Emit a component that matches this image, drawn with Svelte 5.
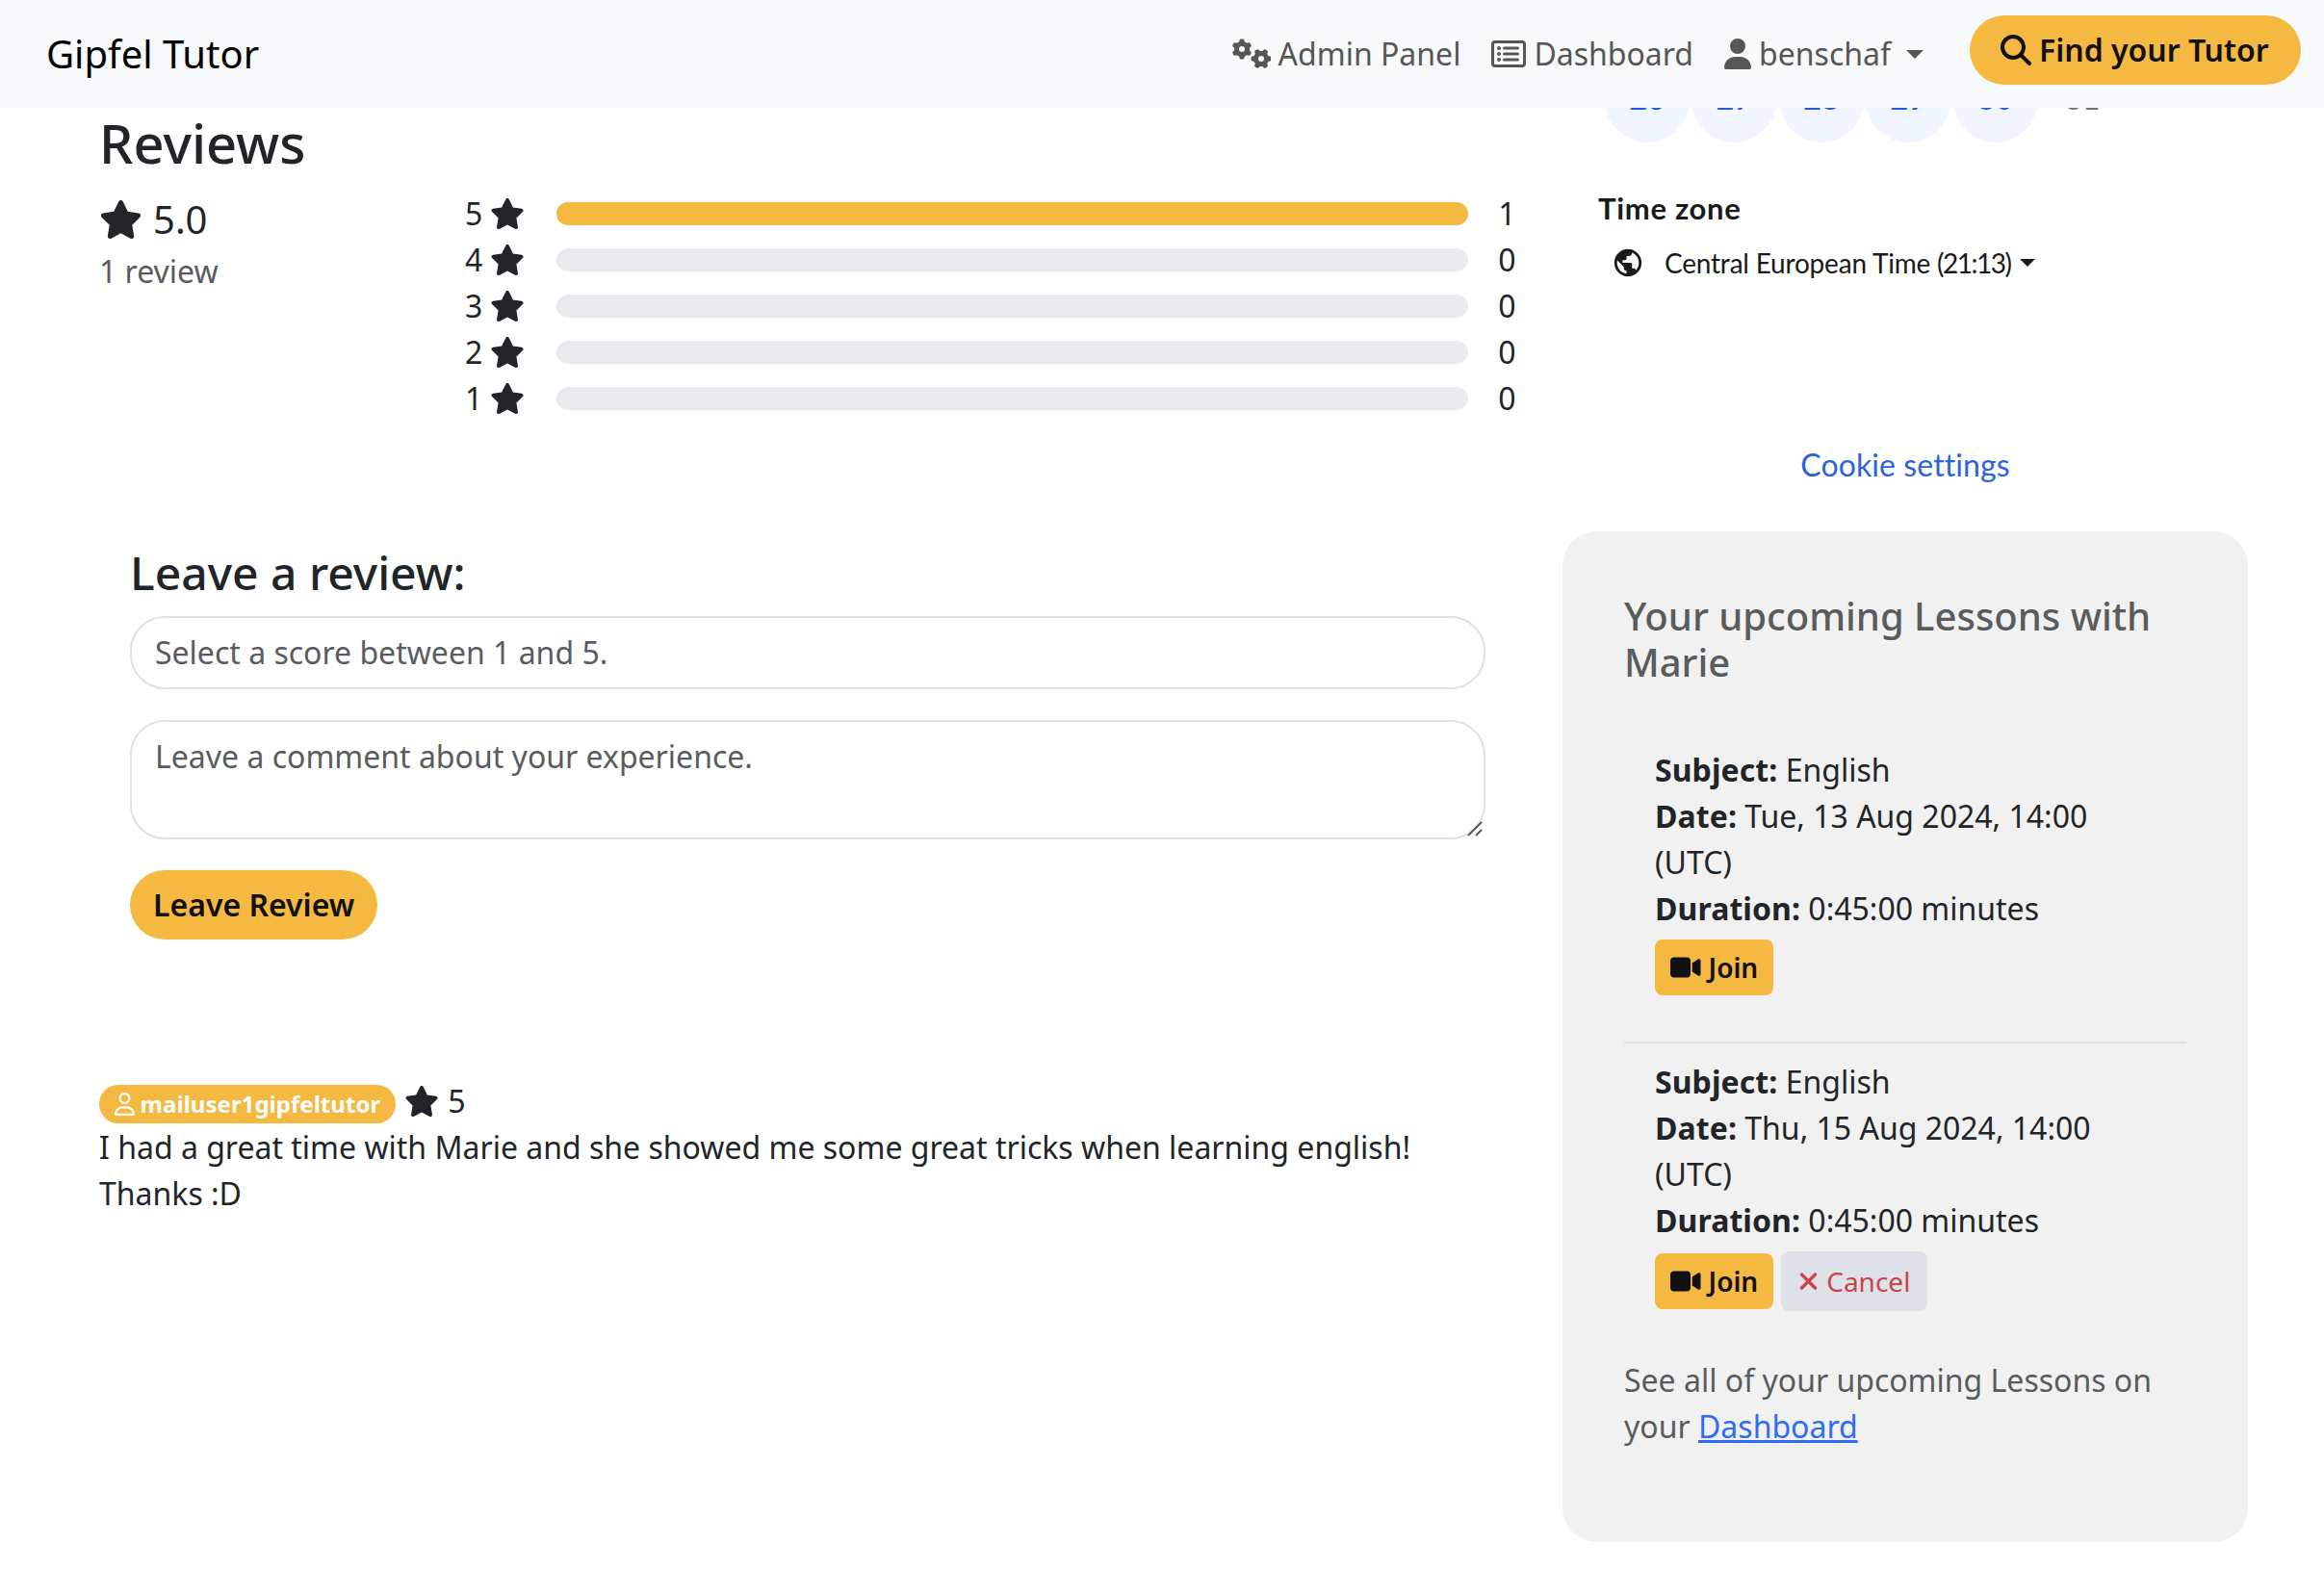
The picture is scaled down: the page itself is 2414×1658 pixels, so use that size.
<script>
  const icons = {
    star: {
      w: 576,
      d: 'M316.9 18C311.6 7 300.4 0 288.1 0s-23.4 7-28.8 18L195 150.3 51.4 171.5c-12 1.8-22 10.2-25.7 21.7s-.7 24.2 7.9 32.7L137.8 329 113.2 474.7c-2 12 3 24.2 12.9 31.3s23 8 33.8 2.3l128.3-68.5 128.3 68.5c10.8 5.7 23.9 4.9 33.8-2.3s14.9-19.3 12.9-31.3L438.5 329 542.7 225.9c8.6-8.5 11.7-21.2 7.9-32.7s-13.7-19.9-25.7-21.7L381.2 150.3 316.9 18z'
    },
    user: {
      w: 448,
      d: 'M224 256A128 128 0 1 0 224 0a128 128 0 1 0 0 256zm-45.7 48C79.8 304 0 383.8 0 482.3C0 498.7 13.3 512 29.7 512H418.3c16.4 0 29.7-13.3 29.7-29.7C448 383.8 368.2 304 269.7 304H178.3z'
    },
    userOutline: {
      w: 448,
      d: 'M304 128a80 80 0 1 0-160 0 80 80 0 1 0 160 0zM96 128a128 128 0 1 1 256 0A128 128 0 1 1 96 128zM49.3 464H398.7c-8.9-63.3-63.3-112-129-112H178.3c-65.7 0-120.1 48.7-129 112zM0 482.3C0 383.8 79.8 304 178.3 304h91.4C368.2 304 448 383.8 448 482.3c0 16.4-13.3 29.7-29.7 29.7H29.7C13.3 512 0 498.7 0 482.3z'
    },
    search: {
      w: 512,
      d: 'M416 208c0 45.9-14.9 88.3-40 122.7L502.6 457.4c12.5 12.5 12.5 32.8 0 45.3s-32.8 12.5-45.3 0L330.7 376c-34.4 25.2-76.8 40-122.7 40C93.1 416 0 322.9 0 208S93.1 0 208 0S416 93.1 416 208zM208 352a144 144 0 1 0 0-288 144 144 0 1 0 0 288z'
    },
    video: {
      w: 576,
      d: 'M0 128C0 92.7 28.7 64 64 64H320c35.3 0 64 28.7 64 64V384c0 35.3-28.7 64-64 64H64c-35.3 0-64-28.7-64-64V128zM559.1 99.8c10.4 5.6 16.9 16.4 16.9 28.2V384c0 11.8-6.5 22.6-16.9 28.2s-23 5-32.9-1.6l-96-64L416 337.1V320 192 174.9l14.2-9.5 96-64c9.8-6.5 22.4-7.2 32.9-1.6z'
    },
    xmark: {
      w: 384,
      d: 'M342.6 150.6c12.5-12.5 12.5-32.8 0-45.3s-32.8-12.5-45.3 0L192 210.7 86.6 105.4c-12.5-12.5-32.8-12.5-45.3 0s-12.5 32.8 0 45.3L146.7 256 41.4 361.4c-12.5 12.5-12.5 32.8 0 45.3s32.8 12.5 45.3 0L192 301.3 297.4 406.6c12.5 12.5 32.8 12.5 45.3 0s12.5-32.8 0-45.3L237.3 256 342.6 150.6z'
    }
  };
  const gear =
    'M308.5 135.3c7.1-6.3 9.9-16.2 6.2-25c-2.3-5.3-4.8-10.5-7.6-15.5L304 89.4c-3-5-6.3-9.9-9.8-14.6c-5.7-7.6-15.7-10.1-24.7-7.1l-28.2 9.3c-10.7-8.8-23-16-36.2-20.9L199 27.1c-1.9-9.3-9.1-16.7-18.5-17.8C173.9 8.4 167.2 8 160.4 8h-.7c-6.8 0-13.5 .4-20.1 1.2c-9.4 1.1-16.6 8.6-18.5 17.8L115 56.1c-13.3 5-25.5 12.1-36.2 20.9L50.5 67.8c-9-3-19-.5-24.7 7.1c-3.5 4.7-6.8 9.6-9.9 14.6l-3 5.3c-2.8 5-5.3 10.2-7.6 15.6c-3.7 8.7-.9 18.6 6.2 25l22.2 19.8C32.6 161.9 32 168.9 32 176s.6 14.1 1.7 20.9L11.5 216.7c-7.1 6.3-9.9 16.2-6.2 25c2.3 5.3 4.8 10.5 7.6 15.6l3 5.2c3 5.1 6.3 9.9 9.9 14.6c5.7 7.6 15.7 10.1 24.7 7.1l28.2-9.3c10.7 8.8 23 16 36.2 20.9l6.1 29.1c1.9 9.3 9.1 16.7 18.5 17.8c6.7 .8 13.5 1.2 20.4 1.2s13.7-.4 20.4-1.2c9.4-1.1 16.6-8.6 18.5-17.8l6.1-29.1c13.3-5 25.5-12.1 36.2-20.9l28.2 9.3c9 3 19 .5 24.7-7.1c3.5-4.7 6.8-9.5 9.8-14.6l3.1-5.4c2.8-5 5.3-10.2 7.6-15.5c3.7-8.7 .9-18.6-6.2-25l-22.2-19.8c1.1-6.8 1.7-13.8 1.7-20.9s-.6-14.1-1.7-20.9l22.2-19.8zM112 176a48 48 0 1 1 96 0 48 48 0 1 1 -96 0z';

  const scores = [
    { stars: 5, count: 1 },
    { stars: 4, count: 0 },
    { stars: 3, count: 0 },
    { stars: 2, count: 0 },
    { stars: 1, count: 0 }
  ];
  const total = scores.reduce((sum, s) => sum + s.count, 0);

  const days = [
    { n: 26, open: true },
    { n: 27, open: true },
    { n: 28, open: true },
    { n: 29, open: true },
    { n: 30, open: true },
    { n: 31, open: false }
  ];

  const lessons = [
    { subject: 'English', date: 'Tue, 13 Aug 2024, 14:00 (UTC)', duration: '0:45:00 minutes', cancel: false },
    { subject: 'English', date: 'Thu, 15 Aug 2024, 14:00 (UTC)', duration: '0:45:00 minutes', cancel: true }
  ];
</script>

{#snippet icon(name)}
  <svg class="icon {name}" viewBox="0 0 {icons[name].w} 512" aria-hidden="true"><path d={icons[name].d} /></svg>
{/snippet}

<header class="navbar">
  <a class="brand" href="#home">Gipfel Tutor</a>
  <nav>
    <a class="nav-link" href="#admin">
      <svg class="icon gears" viewBox="0 0 640 512" aria-hidden="true">
        <path d={gear} />
        <path d={gear} transform="translate(480 336) rotate(90) translate(-160 -176)" />
      </svg>
      <span>Admin Panel</span>
    </a>
    <a class="nav-link" href="#dashboard">
      <svg class="icon list" viewBox="0 0 576 512" aria-hidden="true">
        <rect x="24" y="56" width="528" height="400" rx="40" />
        <path d="M216 160H440M216 256H440M216 352H440" />
        <circle cx="128" cy="160" r="32" /><circle cx="128" cy="256" r="32" /><circle cx="128" cy="352" r="32" />
      </svg>
      <span>Dashboard</span>
    </a>
    <a class="nav-link" href="#account">
      {@render icon('user')}
      <span>benschaf</span>
      <i class="caret"></i>
    </a>
  </nav>
  <a class="btn pill find" href="#tutors">{@render icon('search')}<span>Find your Tutor</span></a>
</header>

<main>
  <section class="reviews">
    <h2>Reviews</h2>
    <div class="summary">
      <div class="overall">
        <div class="average">{@render icon('star')}<span>5.0</span></div>
        <div class="muted">1 review</div>
      </div>
      <div class="scores">
        {#each scores as s}
          <div class="score">
            <span>{s.stars}</span>
            {@render icon('star')}
            <div class="track"><div class="fill" style="width: {(s.count / total) * 100}%"></div></div>
            <span class="count">{s.count}</span>
          </div>
        {/each}
      </div>
    </div>

    <form>
      <h3>Leave a review:</h3>
      <input type="text" placeholder="Select a score between 1 and 5." />
      <div class="comment-box">
        <textarea placeholder="Leave a comment about your experience."></textarea>
        <svg class="grip" viewBox="0 0 16 16" aria-hidden="true"><path d="M1 15L15 1M9 15L15 9" /></svg>
      </div>
      <button class="btn pill" type="button">Leave Review</button>
    </form>

    <article>
      <div class="author">
        <span class="badge">{@render icon('userOutline')}<span>mailuser1gipfeltutor</span></span>
        {@render icon('star')}
        <span>5</span>
      </div>
      <p>I had a great time with Marie and she showed me some great tricks when learning english! Thanks :D</p>
    </article>
  </section>

  <aside>
    <div class="booking">
      <div class="days">
        {#each days as day}
          <span class="day" class:open={day.open}>{day.n}</span>
        {/each}
      </div>
      <div class="tz-title">Time zone</div>
      <div class="tz">
        <svg class="globe" viewBox="0 0 24 24" aria-hidden="true">
          <path d="M12 2C6.48 2 2 6.48 2 12s4.48 10 10 10 10-4.48 10-10S17.52 2 12 2zm-1 17.93c-3.95-.49-7-3.85-7-7.93 0-.62.08-1.21.21-1.79L9 15v1c0 1.1.9 2 2 2v1.93zm6.9-2.54c-.26-.81-1-1.39-1.9-1.39h-1v-3c0-.55-.45-1-1-1H8v-2h2c.55 0 1-.45 1-1V7h2c1.1 0 2-.9 2-2v-.41c2.93 1.19 5 4.06 5 7.41 0 2.08-.8 3.97-2.1 5.39z" />
        </svg>
        <span>Central European Time <span class="clock">(21:13)</span></span>
        <i class="caret dark"></i>
      </div>
      <a class="cookies" href="#cookies">Cookie settings</a>
    </div>

    <div class="card">
      <h4>Your upcoming Lessons with Marie</h4>
      <div class="lessons">
        {#each lessons as lesson}
          <div class="lesson">
            <div><strong>Subject:</strong> {lesson.subject}</div>
            <div><strong>Date:</strong> {lesson.date}</div>
            <div><strong>Duration:</strong> {lesson.duration}</div>
            <div class="actions">
              <button class="btn small" type="button">{@render icon('video')}<span>Join</span></button>
              {#if lesson.cancel}
                <button class="btn small cancel" type="button">{@render icon('xmark')}<span>Cancel</span></button>
              {/if}
            </div>
          </div>
        {/each}
      </div>
      <p class="more">See all of your upcoming Lessons on your <a href="#dashboard">Dashboard</a></p>
    </div>
  </aside>
</main>

<style>
  :global(body) {
    background: #fff;
    overflow: hidden;
  }
  :global(#app) {
    font-family: 'Noto Sans', sans-serif;
    font-size: 32px;
    line-height: 48px;
    color: #212529;
  }
  * {
    box-sizing: border-box;
  }
  h2, h3, h4, p {
    margin: 0;
    font-weight: 500;
  }
  p {
    font-weight: 400;
  }
  .icon {
    display: block;
    height: 32px;
    flex: none;
    fill: currentColor;
  }
  .star { width: 36px; }
  .user { width: 28px; }
  .search { width: 32px; }

  .navbar {
    position: relative;
    z-index: 1;
    height: 112px;
    padding: 0 24px 0 48px;
    display: flex;
    align-items: center;
    background: #f8f9fb;
  }
  .brand {
    font-size: 40px;
    line-height: 60px;
    color: #000;
    text-decoration: none;
  }
  nav {
    margin-left: auto;
    display: flex;
    gap: 32px;
  }
  .nav-link {
    display: flex;
    align-items: center;
    gap: 8px;
    color: #565656;
    text-decoration: none;
  }
  .gears { width: 40px; }
  .list {
    width: 36px;
  }
  .list rect, .list path {
    fill: none;
    stroke: currentColor;
    stroke-width: 48;
    stroke-linecap: round;
  }
  .caret {
    margin: 0 0 0 8px;
    border: 9.6px solid transparent;
    border-top-color: currentColor;
    border-bottom: 0;
  }
  .btn {
    display: inline-flex;
    align-items: center;
    gap: 8px;
    border: 0;
    margin: 0;
    background: #f5b942;
    color: #111;
    font-family: inherit;
    text-decoration: none;
  }
  .pill {
    height: 72px;
    padding: 0 24px;
    border-radius: 36px;
    font-size: 32px;
    line-height: 48px;
    font-weight: 600;
  }
  .find {
    width: 344px;
    margin: 0 0 8px 48px;
    padding: 0 32px;
    white-space: nowrap;
  }

  main {
    display: grid;
    grid-template-columns: 1471px 712px;
    column-gap: 49px;
    padding-left: 103px;
    align-items: start;
  }
  .reviews {
    padding-top: 3px;
  }
  h2 {
    font-size: 56px;
    line-height: 67px;
    margin-bottom: 16px;
  }
  .summary {
    display: grid;
    grid-template-columns: 380px 1fr;
    align-items: start;
  }
  .average {
    display: flex;
    align-items: center;
    gap: 11px;
    font-size: 40px;
    line-height: 60px;
  }
  .average :global(.star) {
    width: 45px;
    height: 40px;
  }
  .muted {
    color: #595c5f;
  }
  .score {
    display: flex;
    align-items: center;
    gap: 8px;
    height: 48px;
  }
  .track {
    width: 947px;
    height: 24px;
    margin-left: 25px;
    border-radius: 12px;
    background: #eaebef;
    overflow: hidden;
  }
  .fill {
    height: 100%;
    background: #f5b942;
  }
  .count {
    margin-left: 23px;
  }

  form {
    width: 1408px;
    margin: 128px 0 0 32px;
    display: flex;
    flex-direction: column;
    align-items: flex-start;
  }
  h3 {
    font-size: 48px;
    line-height: 58px;
    margin-bottom: 16px;
  }
  input, textarea {
    display: block;
    width: 100%;
    height: 76px;
    margin: 0;
    padding: 12px 24px;
    border: 2px solid #dee2e6;
    border-radius: 36px;
    background: #fff;
    color: #212529;
    font: inherit;
    outline: 0;
  }
  input {
    padding-bottom: 13px;
    padding-top: 11px;
  }
  textarea {
    height: 124px;
    resize: none;
    overflow: hidden;
  }
  ::placeholder {
    color: #595c5f;
    opacity: 1;
  }
  .comment-box {
    position: relative;
    width: 100%;
    margin: 32px 0;
  }
  .grip {
    position: absolute;
    right: 3px;
    bottom: 3px;
    width: 16px;
    height: 16px;
    fill: none;
    stroke: #555;
    stroke-width: 1.8;
  }
  article {
    margin-top: 144px;
  }
  .author {
    display: flex;
    align-items: center;
    gap: 9px;
    height: 48px;
  }
  .badge {
    display: inline-flex;
    align-items: center;
    gap: 6px;
    height: 40px;
    margin-top: 6px;
    padding: 0 16px 0 15.6px;
    border-radius: 20px;
    background: #f5b942;
    color: #fff;
    font-size: 24px;
    line-height: 24px;
    font-weight: 700;
    letter-spacing: 0.03px;
  }
  .badge :global(.userOutline) {
    width: 21px;
    height: 24px;
  }

  .booking {
    height: 492px;
    margin-top: -52px;
    padding: 0 37px;
    display: flex;
    flex-direction: column;
    align-items: flex-start;
    font-family: Lato, sans-serif;
    color: #1a1a1a;
  }
  .days {
    display: flex;
    gap: 2.4px;
    padding-left: 7px;
  }
  .day {
    width: 88px;
    height: 88px;
    border-radius: 50%;
    text-align: center;
    line-height: 84px;
    color: #737373;
  }
  .day.open {
    background: #f0f5ff;
    color: #1f5be0;
    font-weight: 700;
  }
  .tz-title {
    margin-top: 44px;
    font-size: 31px;
    font-weight: 700;
    letter-spacing: 0.7px;
  }
  .tz {
    display: flex;
    align-items: center;
    margin: 9px 0 0 14px;
    font-size: 28px;
    letter-spacing: -0.2px;
  }
  .clock {
    letter-spacing: -1.5px;
  }
  .globe {
    width: 34px;
    height: 34px;
    margin-right: 21px;
    fill: #1a1a1a;
  }
  .dark {
    margin-left: 9px;
    border-width: 8.5px;
    border-bottom: 0;
  }
  .cookies {
    align-self: center;
    margin-top: 162px;
    font-size: 32px;
    letter-spacing: 0.1px;
    color: #2a62e0;
    text-decoration: none;
  }

  .card {
    height: 1050px;
    padding: 64px;
    border-radius: 36px;
    background: #f1f1f1;
  }
  h4 {
    font-size: 40px;
    line-height: 48px;
    color: #595c5f;
  }
  .lessons {
    margin-top: 48px;
  }
  .lesson {
    padding: 16px 32px 48px;
  }
  .lesson + .lesson {
    border-top: 2px solid #dee2e6;
  }
  strong {
    font-weight: 700;
    letter-spacing: 0.08px;
  }
  .actions {
    display: flex;
    align-items: center;
    gap: 8px;
    padding-top: 8px;
  }
  .small {
    height: 58px;
    gap: 8px;
    padding: 0 16px;
    border-radius: 8px;
    font-size: 28px;
    line-height: 42px;
    font-weight: 600;
  }
  .small :global(.icon) {
    height: 28px;
  }
  .small :global(.video) { width: 31.5px; }
  .small :global(.xmark) { width: 21px; }
  .cancel {
    height: 62px;
    gap: 8px;
    padding: 0 18px;
    background: #dee2e8;
    color: #cc444b;
    font-weight: 400;
  }
  .more {
    color: #595c5f;
  }
  .more a {
    color: #2f6bf6;
  }
</style>
